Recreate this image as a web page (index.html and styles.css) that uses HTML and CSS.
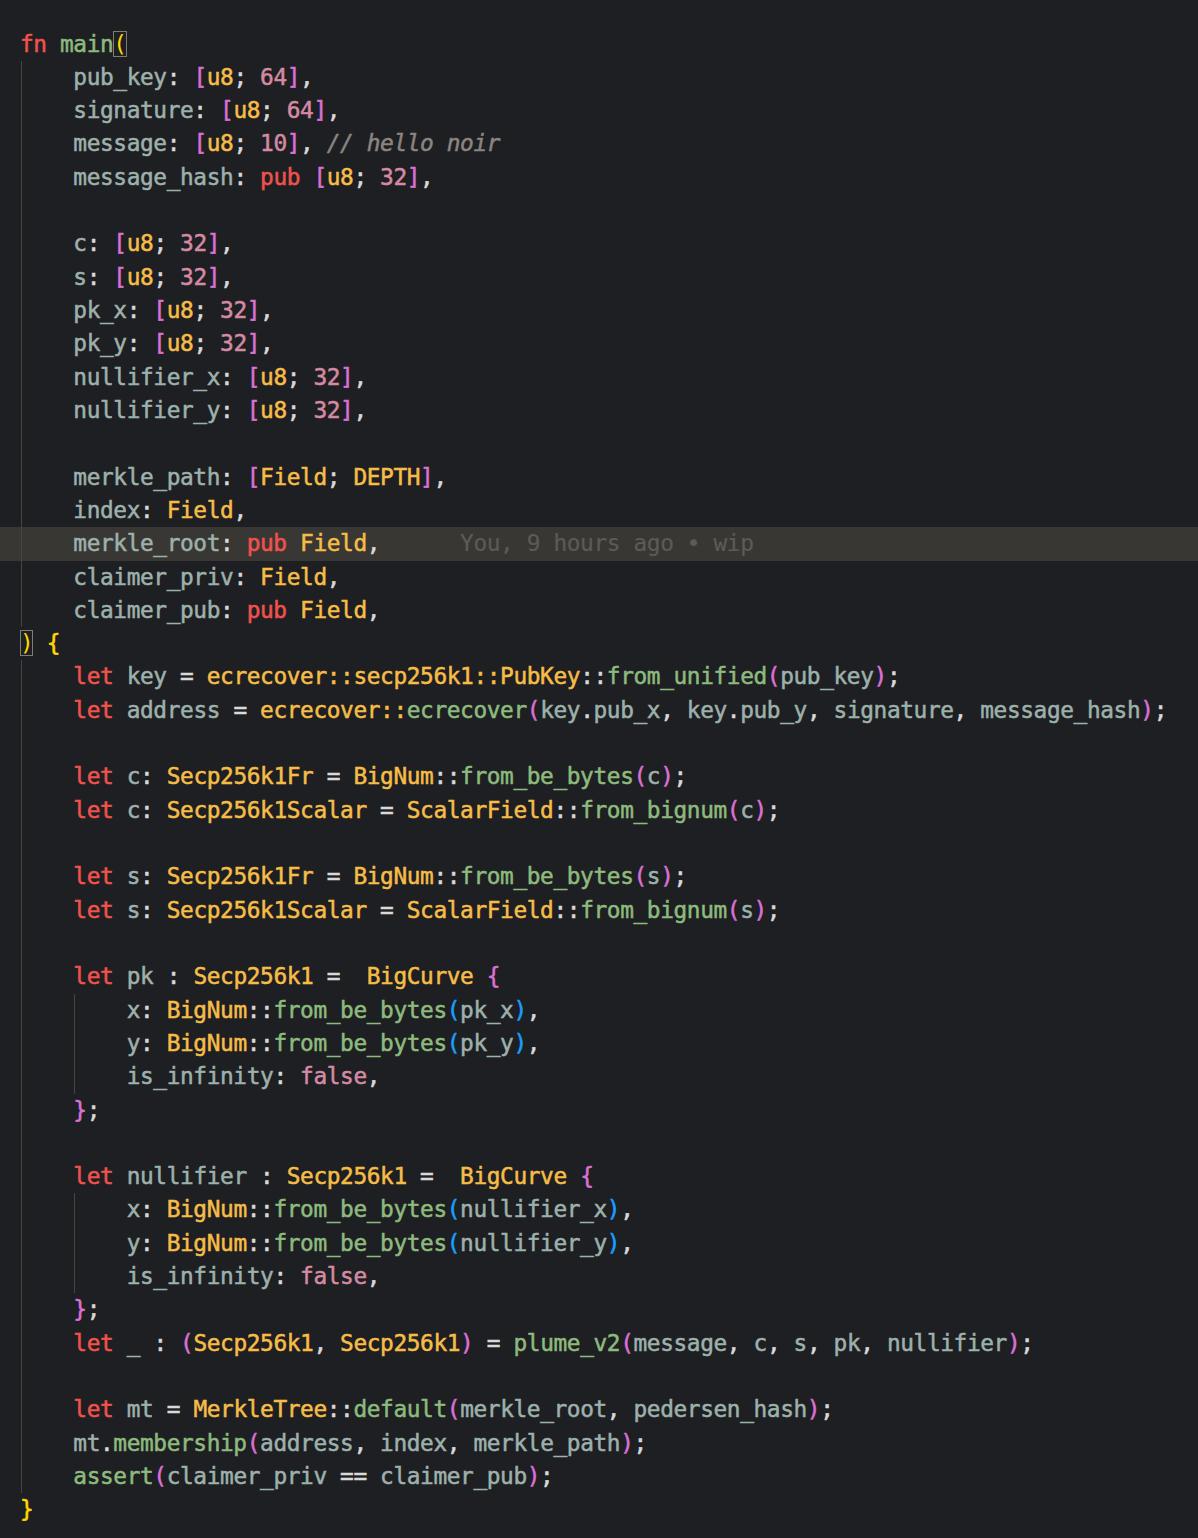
FILE: index.html
```html
<!DOCTYPE html>
<html lang="en">

<head>
    <meta charset="UTF-8">
    <meta name="viewport" content="width=device-width, initial-scale=1.0">
    <title>main.nr</title>
    <link rel="stylesheet" href="styles.css">
</head>

<body>
    <div class="editor">
        <div class="line"><span class="k">fn</span> <span class="f">main</span><span class="b1 match">(</span></div>
        <div class="line"><span class="g">    </span><span class="v">pub_key</span>: <span class="b2">[</span><span class="t">u8</span>; <span class="n">64</span><span class="b2">]</span>,</div>
        <div class="line"><span class="g">    </span><span class="v">signature</span>: <span class="b2">[</span><span class="t">u8</span>; <span class="n">64</span><span class="b2">]</span>,</div>
        <div class="line"><span class="g">    </span><span class="v">message</span>: <span class="b2">[</span><span class="t">u8</span>; <span class="n">10</span><span class="b2">]</span>, <span class="c">// hello noir</span></div>
        <div class="line"><span class="g">    </span><span class="v">message_hash</span>: <span class="k">pub</span> <span class="b2">[</span><span class="t">u8</span>; <span class="n">32</span><span class="b2">]</span>,</div>
        <div class="line"><span class="g">    </span></div>
        <div class="line"><span class="g">    </span><span class="v">c</span>: <span class="b2">[</span><span class="t">u8</span>; <span class="n">32</span><span class="b2">]</span>,</div>
        <div class="line"><span class="g">    </span><span class="v">s</span>: <span class="b2">[</span><span class="t">u8</span>; <span class="n">32</span><span class="b2">]</span>,</div>
        <div class="line"><span class="g">    </span><span class="v">pk_x</span>: <span class="b2">[</span><span class="t">u8</span>; <span class="n">32</span><span class="b2">]</span>,</div>
        <div class="line"><span class="g">    </span><span class="v">pk_y</span>: <span class="b2">[</span><span class="t">u8</span>; <span class="n">32</span><span class="b2">]</span>,</div>
        <div class="line"><span class="g">    </span><span class="v">nullifier_x</span>: <span class="b2">[</span><span class="t">u8</span>; <span class="n">32</span><span class="b2">]</span>,</div>
        <div class="line"><span class="g">    </span><span class="v">nullifier_y</span>: <span class="b2">[</span><span class="t">u8</span>; <span class="n">32</span><span class="b2">]</span>,</div>
        <div class="line"><span class="g">    </span></div>
        <div class="line"><span class="g">    </span><span class="v">merkle_path</span>: <span class="b2">[</span><span class="t">Field</span>; <span class="t">DEPTH</span><span class="b2">]</span>,</div>
        <div class="line"><span class="g">    </span><span class="v">index</span>: <span class="t">Field</span>,</div>
        <div class="line current"><span class="g">    </span><span class="v">merkle_root</span>: <span class="k">pub</span> <span class="t">Field</span>,      <span class="blame">You, 9 hours ago • wip</span></div>
        <div class="line"><span class="g">    </span><span class="v">claimer_priv</span>: <span class="t">Field</span>,</div>
        <div class="line"><span class="g">    </span><span class="v">claimer_pub</span>: <span class="k">pub</span> <span class="t">Field</span>,</div>
        <div class="line"><span class="b1 match">)</span> <span class="b1">{</span></div>
        <div class="line"><span class="g">    </span><span class="k">let</span> <span class="v">key</span> = <span class="t">ecrecover::secp256k1::PubKey</span>::<span class="f">from_unified</span><span class="b2">(</span><span class="v">pub_key</span><span class="b2">)</span>;</div>
        <div class="line"><span class="g">    </span><span class="k">let</span> <span class="v">address</span> = <span class="t">ecrecover::</span><span class="f">ecrecover</span><span class="b2">(</span><span class="v">key</span>.<span class="v">pub_x</span>, <span class="v">key</span>.<span class="v">pub_y</span>, <span class="v">signature</span>, <span class="v">message_hash</span><span class="b2">)</span>;</div>
        <div class="line"><span class="g">    </span></div>
        <div class="line"><span class="g">    </span><span class="k">let</span> <span class="v">c</span>: <span class="t">Secp256k1Fr</span> = <span class="t">BigNum</span>::<span class="f">from_be_bytes</span><span class="b2">(</span><span class="v">c</span><span class="b2">)</span>;</div>
        <div class="line"><span class="g">    </span><span class="k">let</span> <span class="v">c</span>: <span class="t">Secp256k1Scalar</span> = <span class="t">ScalarField</span>::<span class="f">from_bignum</span><span class="b2">(</span><span class="v">c</span><span class="b2">)</span>;</div>
        <div class="line"><span class="g">    </span></div>
        <div class="line"><span class="g">    </span><span class="k">let</span> <span class="v">s</span>: <span class="t">Secp256k1Fr</span> = <span class="t">BigNum</span>::<span class="f">from_be_bytes</span><span class="b2">(</span><span class="v">s</span><span class="b2">)</span>;</div>
        <div class="line"><span class="g">    </span><span class="k">let</span> <span class="v">s</span>: <span class="t">Secp256k1Scalar</span> = <span class="t">ScalarField</span>::<span class="f">from_bignum</span><span class="b2">(</span><span class="v">s</span><span class="b2">)</span>;</div>
        <div class="line"><span class="g">    </span></div>
        <div class="line"><span class="g">    </span><span class="k">let</span> <span class="v">pk</span> : <span class="t">Secp256k1</span> =  <span class="t">BigCurve</span> <span class="b2">{</span></div>
        <div class="line"><span class="g">    </span><span class="g">    </span><span class="v">x</span>: <span class="t">BigNum</span>::<span class="f">from_be_bytes</span><span class="b3">(</span><span class="v">pk_x</span><span class="b3">)</span>,</div>
        <div class="line"><span class="g">    </span><span class="g">    </span><span class="v">y</span>: <span class="t">BigNum</span>::<span class="f">from_be_bytes</span><span class="b3">(</span><span class="v">pk_y</span><span class="b3">)</span>,</div>
        <div class="line"><span class="g">    </span><span class="g">    </span><span class="v">is_infinity</span>: <span class="n">false</span>,</div>
        <div class="line"><span class="g">    </span><span class="b2">}</span>;</div>
        <div class="line"><span class="g">    </span></div>
        <div class="line"><span class="g">    </span><span class="k">let</span> <span class="v">nullifier</span> : <span class="t">Secp256k1</span> =  <span class="t">BigCurve</span> <span class="b2">{</span></div>
        <div class="line"><span class="g">    </span><span class="g">    </span><span class="v">x</span>: <span class="t">BigNum</span>::<span class="f">from_be_bytes</span><span class="b3">(</span><span class="v">nullifier_x</span><span class="b3">)</span>,</div>
        <div class="line"><span class="g">    </span><span class="g">    </span><span class="v">y</span>: <span class="t">BigNum</span>::<span class="f">from_be_bytes</span><span class="b3">(</span><span class="v">nullifier_y</span><span class="b3">)</span>,</div>
        <div class="line"><span class="g">    </span><span class="g">    </span><span class="v">is_infinity</span>: <span class="n">false</span>,</div>
        <div class="line"><span class="g">    </span><span class="b2">}</span>;</div>
        <div class="line"><span class="g">    </span><span class="k">let</span> <span class="v">_</span> : <span class="b2">(</span><span class="t">Secp256k1</span>, <span class="t">Secp256k1</span><span class="b2">)</span> = <span class="f">plume_v2</span><span class="b2">(</span><span class="v">message</span>, <span class="v">c</span>, <span class="v">s</span>, <span class="v">pk</span>, <span class="v">nullifier</span><span class="b2">)</span>;</div>
        <div class="line"><span class="g">    </span></div>
        <div class="line"><span class="g">    </span><span class="k">let</span> <span class="v">mt</span> = <span class="t">MerkleTree</span>::<span class="f">default</span><span class="b2">(</span><span class="v">merkle_root</span>, <span class="v">pedersen_hash</span><span class="b2">)</span>;</div>
        <div class="line"><span class="g">    </span><span class="v">mt</span>.<span class="f">membership</span><span class="b2">(</span><span class="v">address</span>, <span class="v">index</span>, <span class="v">merkle_path</span><span class="b2">)</span>;</div>
        <div class="line"><span class="g">    </span><span class="f">assert</span><span class="b2">(</span><span class="v">claimer_priv</span> == <span class="v">claimer_pub</span><span class="b2">)</span>;</div>
        <div class="line"><span class="b1">}</span></div>
    </div>
</body>

</html>
```

FILE: styles.css
```css
* {
    margin: 0;
    padding: 0;
    box-sizing: border-box;
}

body {
    background-color: #1e1f22;
    color: #d9d9d9;
    font-family: "DejaVu Sans Mono", monospace;
    font-size: 22.8px;
    letter-spacing: -0.39px;
    -webkit-text-stroke: 0.5px currentColor;
    height: 1538px;
    overflow: hidden;
}

.editor {
    padding-top: 27.5px;
}

.line {
    height: 33.32px;
    line-height: 33.32px;
    padding-left: 20px;
    white-space: pre;
}

.line.current {
    background-color: #393734;
}

.g {
    background: linear-gradient(#46463f, #46463f) no-repeat 1px 0 / 1px 100%;
    display: inline-block;
    height: 33.32px;
    vertical-align: top;
}

.k {
    color: #f0524d;
}

.f {
    color: #8dba7d;
}

.v {
    color: #9db1ac;
}

.t {
    color: #f5bd48;
}

.n {
    color: #d48aa2;
}

.c {
    color: #8a8580;
    font-style: italic;
}

.b1 {
    color: #ffd700;
}

.b2 {
    color: #da70d6;
}

.b3 {
    color: #179fff;
}

.match {
    outline: 1px solid #7d7d72;
    outline-offset: -1px;
    -webkit-text-stroke: 0;
}

.blame {
    color: #5e5a55;
    -webkit-text-stroke: 0.2px currentColor;
}
```
